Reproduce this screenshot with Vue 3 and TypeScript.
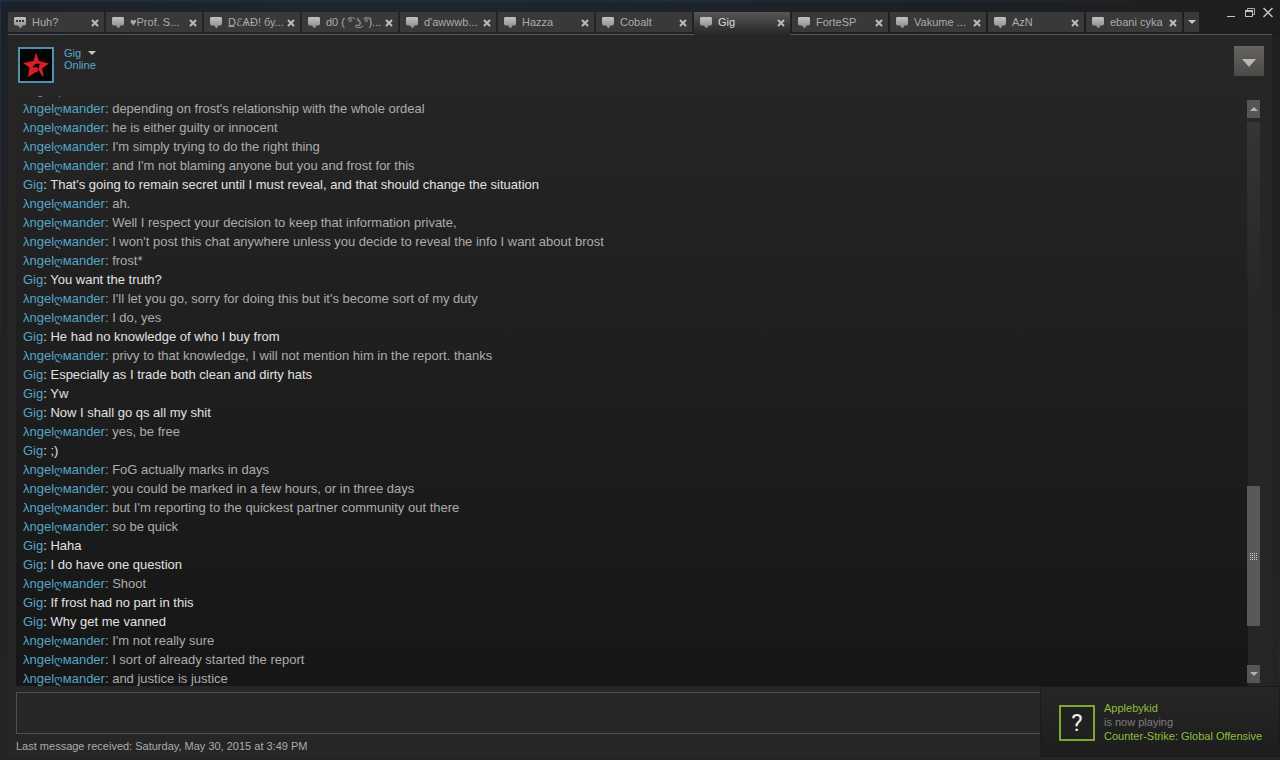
<script setup lang="ts">
import { ref } from 'vue'

interface Tab { id: number; title: string; typing?: boolean }
interface Message { from: 'me' | 'gig'; text: string }

const tabs: Tab[] = [
  { id: 0, title: 'Huh?', typing: true },
  { id: 1, title: '♥Prof. S...' },
  { id: 2, title: 'D̲ℰѦĐ! бу...' },
  { id: 3, title: 'd0 ( ͡° ͜ʖ ͡°)...' },
  { id: 4, title: "d'awwwb..." },
  { id: 5, title: 'Hazza' },
  { id: 6, title: 'Cobalt' },
  { id: 7, title: 'Gig' },
  { id: 8, title: 'ForteSP' },
  { id: 9, title: 'Vakume ...' },
  { id: 10, title: 'AzN' },
  { id: 11, title: 'ebani cyka' },
]
const active = ref(7)
const draft = ref('')

const messages: Message[] = [
  { from: 'me', text: '' },
  { from: 'me', text: "depending on frost's relationship with the whole ordeal" },
  { from: 'me', text: 'he is either guilty or innocent' },
  { from: 'me', text: "I'm simply trying to do the right thing" },
  { from: 'me', text: "and I'm not blaming anyone but you and frost for this" },
  { from: 'gig', text: "That's going to remain secret until I must reveal, and that should change the situation" },
  { from: 'me', text: 'ah.' },
  { from: 'me', text: 'Well I respect your decision to keep that information private,' },
  { from: 'me', text: "I won't post this chat anywhere unless you decide to reveal the info I want about brost" },
  { from: 'me', text: 'frost*' },
  { from: 'gig', text: 'You want the truth?' },
  { from: 'me', text: "I'll let you go, sorry for doing this but it's become sort of my duty" },
  { from: 'me', text: 'I do, yes' },
  { from: 'gig', text: 'He had no knowledge of who I buy from' },
  { from: 'me', text: 'privy to that knowledge, I will not mention him in the report. thanks' },
  { from: 'gig', text: 'Especially as I trade both clean and dirty hats' },
  { from: 'gig', text: 'Yw' },
  { from: 'gig', text: 'Now I shall go qs all my shit' },
  { from: 'me', text: 'yes, be free' },
  { from: 'gig', text: ';)' },
  { from: 'me', text: 'FoG actually marks in days' },
  { from: 'me', text: 'you could be marked in a few hours, or in three days' },
  { from: 'me', text: "but I'm reporting to the quickest partner community out there" },
  { from: 'me', text: 'so be quick' },
  { from: 'gig', text: 'Haha' },
  { from: 'gig', text: 'I do have one question' },
  { from: 'me', text: 'Shoot' },
  { from: 'gig', text: 'If frost had no part in this' },
  { from: 'gig', text: 'Why get me vanned' },
  { from: 'me', text: "I'm not really sure" },
  { from: 'me', text: 'I sort of already started the report' },
  { from: 'me', text: 'and justice is justice' },
]
</script>

<template>
  <main class="window">
    <header class="titlebar">
      <nav class="tabs" aria-label="Chats">
        <div v-for="t in tabs" :key="t.id" class="tab" :class="{ active: t.id === active }">
          <button class="pick" @click="active = t.id">
            <svg class="bubble" width="12" height="12" viewBox="0 0 12 12" aria-hidden="true">
              <path d="M1 1h10l1 1v6l-1 1.500H8.500L7 12H6L4 9.500H1L0 8V2z" fill="url(#bubbleFill)" />
              <path v-if="t.typing" d="M2 4h2v2H2zM5 4h2v2H5zM8 4h2v2H8z" fill="#333" />
            </svg>
            <span class="title">{{ t.title }}</span>
          </button>
          <button class="close" :aria-label="'Close ' + t.title">
            <svg width="8" height="8" viewBox="0 0 8 8"><path d="M1 1l6 6M7 1L1 7" stroke="#bcbcbc" stroke-width="2" /></svg>
          </button>
        </div>
        <button class="more" aria-label="More chats">
          <svg width="8" height="4" viewBox="0 0 8 4"><path d="M0 0h8L4 4z" fill="#c4c4c4" /></svg>
        </button>
      </nav>
      <div class="controls">
        <button aria-label="Minimize"><svg width="10" height="12" viewBox="0 0 10 12"><path d="M0 10h8v1H0z" fill="#c4c4c4" /></svg></button>
        <button aria-label="Restore"><svg width="10" height="12" viewBox="0 0 10 12"><path d="M2.500 4V2.500h7v6H8" fill="none" stroke="#aaa" /><path d="M.5 4.500h7v6h-7z" fill="none" stroke="#c4c4c4" /><path d="M0 4h8v2H0z" fill="#c4c4c4" /></svg></button>
        <button aria-label="Close"><svg width="10" height="12" viewBox="0 0 10 12"><path d="M.5 2l9 9M9.500 2l-9 9" stroke="#c4c4c4" stroke-width="1.500" /></svg></button>
      </div>
    </header>

    <section class="panel">
      <div class="friend">
        <svg class="avatar" width="36" height="36" viewBox="0 0 36 36" role="img" aria-label="Gig">
          <path d="M1 1h34v34H1z" fill="#050505" stroke="#4c91ad" stroke-width="2" />
          <path d="M18 5.500L21 14l10 2.500-7 5 2 8-8-4.500-8 5 1.500-9.500L5 16l10.500-2z" fill="#dc1c28" />
          <path d="M14.500 19l2-.5.500-1.500 3.500-.5 1.500 1-1 1 .5 1.500-1.500 1.500 4 7.500-5-3.500 1.500-3-2-2.500-3 .5z" fill="#050505" />
        </svg>
        <div class="who">
          <button class="name">Gig <svg width="8" height="4" viewBox="0 0 8 4"><path d="M0 0h8L4 4z" fill="#c4c4c4" /></svg></button>
          <span>Online</span>
        </div>
        <button class="menu" aria-label="Chat options">
          <svg width="14" height="8" viewBox="0 0 14 8"><path d="M0 0h14L7 8z" fill="#b8b8b6" /></svg>
        </button>
      </div>

      <div class="body">
        <div class="log">
          <ul>
            <li v-for="(m, i) in messages" :key="i" :class="m.from"><b v-if="m.from === 'me'">λngel<span class="swirl">ღ</span>мander</b><b v-else>Gig</b>: {{ m.text }}</li>
          </ul>
        </div>
        <div class="scroll">
          <button aria-label="Scroll up"><svg width="8" height="4" viewBox="0 0 8 4"><path d="M0 4h8L4 0z" fill="#b4b4b4" /></svg></button>
          <div class="track">
            <div class="thumb">
              <svg width="7" height="7" viewBox="0 0 7 7" aria-hidden="true">
                <path d="M0 .5h7M0 2.500h7M0 4.500h7M0 6.500h7" stroke="#d0d0d0" stroke-dasharray="1 1" shape-rendering="crispEdges" />
              </svg>
            </div>
          </div>
          <button aria-label="Scroll down"><svg width="8" height="4" viewBox="0 0 8 4"><path d="M0 0h8L4 4z" fill="#b4b4b4" /></svg></button>
        </div>
      </div>

      <textarea v-model="draft" class="entry" aria-label="Message"></textarea>
      <p class="status">Last message received: Saturday, May 30, 2015 at 3:49 PM</p>
    </section>

    <aside class="toast">
      <span class="unknown">?</span>
      <p><em>Applebykid</em><br>is now playing<br><em>Counter-Strike: Global Offensive</em></p>
    </aside>

    <svg class="defs" width="0" height="0" aria-hidden="true">
      <linearGradient id="bubbleFill" x1="0" y1="0" x2="0" y2="1"><stop offset="0" stop-color="#c0c0c0" /><stop offset="1" stop-color="#8c8c8c" /></linearGradient>
    </svg>
  </main>
</template>

<style>
body { margin: 0; background: #1e1e1e; }
</style>

<style scoped>
* { box-sizing: border-box; }
.window {
  position: relative;
  height: 100vh;
  display: flex;
  flex-direction: column;
  padding: 0 8px 3px;
  overflow: hidden;
  background:
    linear-gradient(#1b3146, #1d2329 60%, #212121) left / 1px 100% no-repeat,
    linear-gradient(#1e1e1e, #1c2b3a) right / 1px 100% no-repeat,
    linear-gradient(90deg, #1b2d40, #1b2e40 50%, #1e1e1e) top / 100% 2px no-repeat,
    linear-gradient(90deg, #1e2029, #1f252d 25%, #1e242b 50%, #1d1f22 75%, #1e1e1e) top / 100% 36px no-repeat,
    linear-gradient(#1f2023, #212121 50%, #242424);
  color: #acacac;
  font: 11px/12px "Liberation Sans", Arial, "DejaVu Sans", sans-serif;
}
button { padding: 0; border: 0; background: none; color: inherit; font: inherit; }
svg { display: block; }
.titlebar { display: flex; justify-content: space-between; height: 34px; flex: none; padding-top: 12px; }
.tabs { display: flex; gap: 2px; height: 20px; }
.tab { display: flex; align-items: center; width: 96px; background: #393939; }
.tab.active { height: 23px; padding-bottom: 3px; background: linear-gradient(#565656, #262626); color: #dedede; z-index: 1; }
.pick { display: flex; align-items: center; flex: 1; min-width: 0; height: 20px; padding-left: 6px; text-align: left; }
.bubble { flex: none; margin-right: 6px; }
.title { white-space: nowrap; }
.close { width: 18px; height: 20px; padding: 2px 0 0 5px; }
.more { display: grid; place-items: center; width: 15px; background: #393939; }
.controls { display: flex; gap: 8px; height: 12px; margin: -6px -1px 0 0; }
.panel { flex: 1; min-height: 0; display: flex; flex-direction: column; padding: 0 8px; border-top: 1px solid #565656; background: #262626; }
.friend { display: flex; height: 61px; flex: none; padding: 12px 0 0 2px; color: #5aa9cb; }
.who { flex: 1; padding-left: 10px; }
.name { display: flex; align-items: center; gap: 7px; }
.who span { display: block; }
.menu { display: grid; place-items: center; width: 30px; height: 30px; margin-top: -1px; padding-top: 3px; background: linear-gradient(#67645f, #4a4a48); }
.body { flex: 1; min-height: 0; display: flex; }
.log { flex: 1; overflow: hidden; background: linear-gradient(#252525, #161616); }
ul { margin: -16px 0 0; padding: 0 7px; list-style: none; font-size: 13px; line-height: 19px; }
li { height: 19px; white-space: nowrap; }
li.gig { color: #e2e2e2; }
b { color: #55a5c6; font-weight: 400; }
.swirl { font-size: 11px; line-height: 1; }
.scroll { display: flex; flex-direction: column; gap: 4px; width: 17px; margin-left: -1px; padding: 4px 4px 3px 0; }
.scroll button { display: grid; place-items: center; width: 13px; height: 18px; flex: none; background: #565656; }
.track { flex: 1; width: 13px; display: flex; flex-direction: column; justify-content: flex-end; padding-bottom: 35px; background: linear-gradient(#353535, transparent 35%); }
.thumb { display: grid; place-items: center; height: 140px; background: #595959; }
.entry { display: block; width: 100%; height: 42px; flex: none; margin: 6px 0; border: 1px solid #505050; background: #262626; color: #e2e2e2; resize: none; outline: none; }
.status { margin: 0; height: 17px; flex: none; }
.toast { position: absolute; right: 0; bottom: 3px; display: flex; width: 240px; height: 71px; padding: 14px 0 0 18px; border: 1px solid #1b1b1b; background: linear-gradient(#262626, #1d1d1d); color: #7d7d7d; line-height: 14px; }
.toast p { margin: 0 0 0 9px; white-space: nowrap; }
.toast em { color: #8fbf3a; font-style: normal; }
.unknown { display: grid; place-items: center; width: 36px; height: 36px; margin-top: 4px; border: 2px solid #7fa62f; background: #202020; color: #f0f0f0; font: 24px/32px Roboto, sans-serif; }
.defs { position: absolute; }
</style>
